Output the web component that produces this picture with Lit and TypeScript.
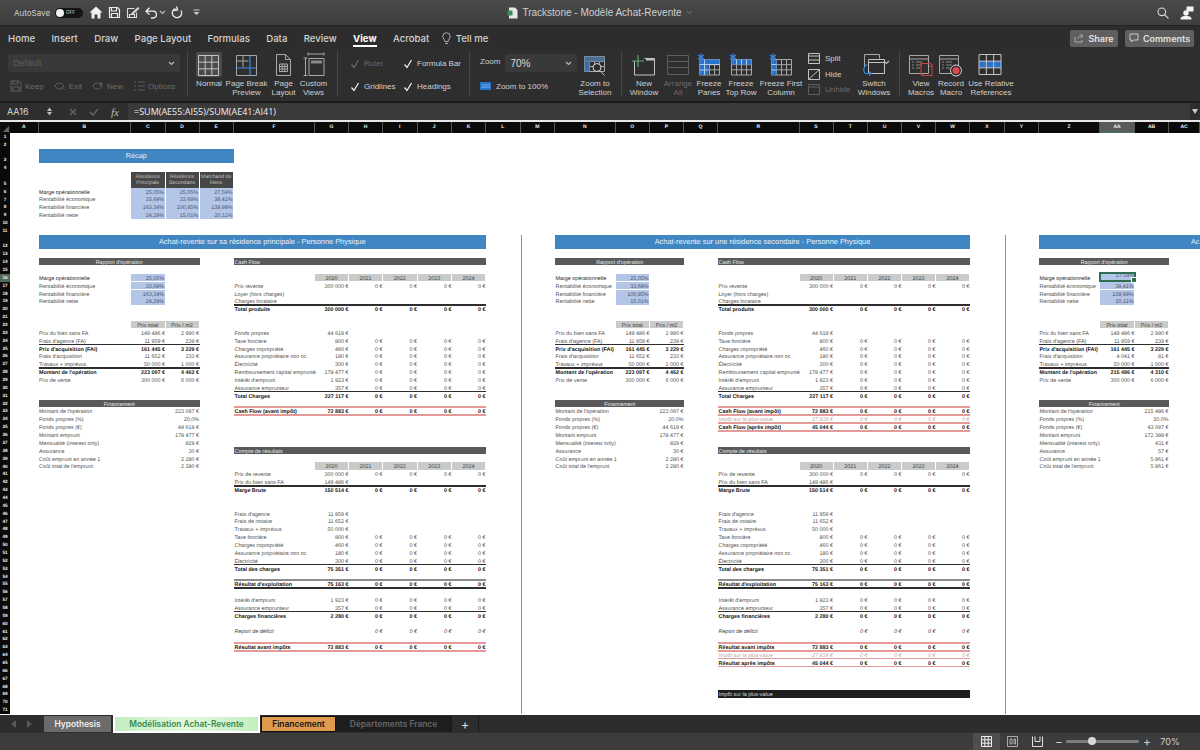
import { LitElement, html, css, svg } from 'lit';
import { customElement } from 'lit/decorators.js';
import { styleMap } from 'lit/directives/style-map.js';

// Column widths of the sheet, A to AC
const COL_WIDTHS = [
  28.5, 92.5, 34.5, 34, 34.5, 81, 34, 34, 34.5, 34.5, 34, 34.5, 34.5, 60.5, 34.5, 34, 34, 81.5, 34, 34.5, 34, 34, 34, 35, 34, 61, 35, 34, 31,
];
const COL_NAMES = COL_WIDTHS.map((_, i) => (i < 26 ? String.fromCharCode(65 + i) : 'A' + String.fromCharCode(39 + i)));
const TALL_ROWS = [3, 5, 12];
const col = (name: string) => COL_NAMES.indexOf(name) + 2;

interface Cell {
  c: number;
  r: number;
  span?: number;
  rows?: number;
  text?: string;
  cls: string;
}

const ZEROS = ['0 €', '0 €', '0 €', '0 €'];
const YEARS = ['2020', '2021', '2022', '2023', '2024'];

function rapport(cells: Cell[], L: number, pcts: string[], acq: string[], montant: string[], fin: string[]) {
  cells.push({ c: L, r: 14, span: 3, text: "Rapport d'opération", cls: 'bar center' });
  ['Marge opérationnelle', 'Rentabilité économique', 'Rentabilité financière', 'Rentabilité nette'].forEach((t, i) => {
    cells.push({ c: L, r: 16 + i, text: t, cls: i === 0 ? 'lbl dark' : 'lbl' });
    cells.push({ c: L + 1, r: 16 + i, text: pcts[i], cls: 'pct' });
  });
  cells.push({ c: L + 1, r: 22, text: 'Prix total', cls: 'yr' });
  cells.push({ c: L + 2, r: 22, text: 'Prix / m2', cls: 'yr' });
  const rows: [string, string, string, string][] = [
    ['Prix du bien sans FA', '149 486 €', '2 990 €', ''],
    ["Frais d'agence (FA)", '11 959 €', '239 €', ''],
    ["Prix d'acquisition (FAI)", '161 445 €', '3 229 €', 'b'],
    ["Frais d'acquisition", acq[0], acq[1], ''],
    ['Travaux + imprévus', '50 000 €', '1 000 €', ''],
    ["Montant de l'opération", montant[0], montant[1], 'b'],
    ['Prix de vente', '300 000 €', '6 000 €', ''],
  ];
  rows.forEach(([t, a, b, k], i) => {
    cells.push({ c: L, r: 23 + i, text: t, cls: `lbl ${k}` });
    cells.push({ c: L + 1, r: 23 + i, text: a, cls: `val ${k}` });
    cells.push({ c: L + 2, r: 23 + i, text: b, cls: `val ${k}` });
  });
  cells.push({ c: L, r: 25, span: 3, cls: 'rule' });
  cells.push({ c: L, r: 28, span: 3, cls: 'rule' });
  cells.push({ c: L, r: 32, span: 3, text: 'Financement', cls: 'bar center' });
  [
    "Montant de l'opération",
    'Fonds propres (%)',
    'Fonds propres (€)',
    'Montant emprunt',
    'Mensualité (interest only)',
    'Assurance',
    'Coût emprunt en année 1',
    "Coût total de l'emprunt",
  ].forEach((t, i) => {
    cells.push({ c: L, r: 33 + i, text: t, cls: 'lbl' });
    cells.push({ c: L + 2, r: 33 + i, text: fin[i], cls: 'val' });
  });
}

function line(cells: Cell[], L: number, r: number, label: string, vals: string[], k = '', skipFirst = false) {
  cells.push({ c: L, r, text: label, cls: `lbl ${k}` });
  vals.forEach((v, i) => cells.push({ c: L + 1 + i + (skipFirst ? 1 : 0), r, text: v, cls: `val ${k}` }));
}

function years(cells: Cell[], L: number, r: number) {
  YEARS.forEach((y, i) => cells.push({ c: L + 1 + i, r, text: y, cls: 'yr' }));
}

function pinkRows(cells: Cell[], L: number, r: number, avant: string, impot: string, apres: string, ext: boolean) {
  cells.push({ c: L, r, span: 6, cls: 'rule pink' });
  cells.push({ c: L, r: r + 1, span: 6, cls: 'rule pink' });
  line(cells, L, r, avant, ['72 883 €', ...ZEROS], 'b');
  if (ext) {
    line(cells, L, r + 1, impot, ['27 839 €', ...ZEROS], 'pale');
    line(cells, L, r + 2, apres, ['45 044 €', ...ZEROS], 'b');
    cells.push({ c: L, r: r + 2, span: 6, cls: 'rule pink' });
    cells.push({ c: L, r: r + 3, span: 6, cls: 'rule pink' });
  }
}

function statements(cells: Cell[], L: number, ext: boolean) {
  cells.push({ c: L, r: 14, span: 6, text: 'Cash Flow', cls: 'bar' });
  years(cells, L, 16);
  line(cells, L, 17, 'Prix revente', ['300 000 €', ...ZEROS]);
  line(cells, L, 18, 'Loyer (hors charges)', []);
  line(cells, L, 19, 'Charges locataire', []);
  cells.push({ c: L, r: 20, span: 6, cls: 'rule' });
  line(cells, L, 20, 'Total produits', ['300 000 €', ...ZEROS], 'b');
  line(cells, L, 23, 'Fonds propres', ['44 619 €']);
  (
    [
      ['Taxe foncière', '800 €'],
      ['Charges copropriété', '460 €'],
      ['Assurance propriétaire non oc.', '180 €'],
      ['Électricité', '300 €'],
      ['Remboursement capital emprunté', '178 477 €'],
      ["Intérêt d'emprunt", '1 923 €'],
      ['Assurance emprunteur', '357 €'],
    ] as [string, string][]
  ).forEach(([t, v], i) => line(cells, L, 24 + i, t, [v, ...ZEROS]));
  cells.push({ c: L, r: 31, span: 6, cls: 'rule' });
  line(cells, L, 31, 'Total Charges', ['227 117 €', ...ZEROS], 'b');
  pinkRows(cells, L, 33, 'Cash Flow (avant impôt)', 'Impôt sur la plus-value', 'Cash Flow (après impôt)', ext);

  cells.push({ c: L, r: 38, span: 6, text: 'Compte de résultats', cls: 'bar' });
  years(cells, L, 40);
  line(cells, L, 41, 'Prix de revente', ['300 000 €', ...ZEROS]);
  line(cells, L, 42, 'Prix du bien sans FA', ['149 486 €']);
  cells.push({ c: L, r: 43, span: 6, cls: 'rule' });
  line(cells, L, 43, 'Marge Brute', ['150 514 €', ...ZEROS], 'b');
  line(cells, L, 46, "Frais d'agence", ['11 959 €']);
  line(cells, L, 47, 'Frais de notaire', ['11 652 €']);
  line(cells, L, 48, 'Travaux + imprévus', ['50 000 €']);
  (
    [
      ['Taxe foncière', '800 €'],
      ['Charges copropriété', '460 €'],
      ['Assurance propriétaire non oc.', '180 €'],
      ['Électricité', '300 €'],
    ] as [string, string][]
  ).forEach(([t, v], i) => line(cells, L, 49 + i, t, [v, ...ZEROS]));
  cells.push({ c: L, r: 53, span: 6, cls: 'rule' });
  line(cells, L, 53, 'Total des charges', ['75 351 €', ...ZEROS], 'b');
  cells.push({ c: L, r: 55, span: 6, cls: 'rule grey' });
  cells.push({ c: L, r: 56, span: 6, cls: 'rule' });
  line(cells, L, 55, "Résultat d'exploitation", ['75 163 €', ...ZEROS], 'b');
  line(cells, L, 57, "Intérêt d'emprunt", ['1 923 €', ...ZEROS]);
  line(cells, L, 58, 'Assurance emprunteur', ['357 €', ...ZEROS]);
  cells.push({ c: L, r: 59, span: 6, cls: 'rule' });
  line(cells, L, 59, 'Charges financières', ['2 280 €', ...ZEROS], 'b');
  line(cells, L, 61, 'Report de déficit', ZEROS, 'it', true);
  pinkRows(cells, L, 63, 'Résultat avant impôts', 'Impôt sur la plus-value', 'Résultat après impôts', ext);
  if (ext) cells.push({ c: L, r: 69, span: 6, text: 'Impôt sur la plus-value', cls: 'bar black' });
}

function buildCells(): Cell[] {
  const cells: Cell[] = [];
  cells.push({ c: col('B'), r: 3, span: 4, text: 'Récap', cls: 'blue recap' });
  ['Résidence Principale', 'Résidence Secondaire', 'Marchand de biens'].forEach((t, i) =>
    cells.push({ c: col('C') + i, r: 5, text: t, cls: 'rhead' }),
  );
  (
    [
      ['Marge opérationnelle', '25,05%', '25,05%', '27,59%'],
      ['Rentabilité économique', '33,69%', '33,69%', '38,41%'],
      ['Rentabilité financière', '163,34%', '100,95%', '139,99%'],
      ['Rentabilité nette', '24,29%', '15,01%', '20,11%'],
    ] as string[][]
  ).forEach((row, i) => {
    cells.push({ c: col('B'), r: 6 + i, text: row[0], cls: i === 0 ? 'lbl dark' : 'lbl' });
    for (let k = 1; k < 4; k++) cells.push({ c: col('B') + k, r: 6 + i, text: row[k], cls: 'pct' });
  });

  cells.push({ c: col('B'), r: 12, span: 10, text: 'Achat-revente sur sa résidence principale - Personne Physique', cls: 'blue' });
  cells.push({ c: col('N'), r: 12, span: 10, text: 'Achat-revente sur une résidence secondaire - Personne Physique', cls: 'blue' });
  cells.push({ c: col('Z'), r: 12, span: 4, text: 'Ac', cls: 'blue clipped' });

  const finA = ['223 097 €', '20,0%', '44 619 €', '178 477 €', '829 €', '30 €', '2 280 €', '2 280 €'];
  rapport(cells, col('B'), ['25,05%', '33,69%', '163,34%', '24,29%'], ['11 652 €', '233 €'], ['223 097 €', '4 462 €'], finA);
  rapport(cells, col('N'), ['25,05%', '33,69%', '100,95%', '15,01%'], ['11 652 €', '233 €'], ['223 097 €', '4 462 €'], finA);
  rapport(
    cells,
    col('Z'),
    ['27,59%', '38,41%', '139,99%', '20,11%'],
    ['4 041 €', '81 €'],
    ['215 486 €', '4 310 €'],
    ['215 486 €', '20,0%', '43 097 €', '172 388 €', '431 €', '57 €', '5 861 €', '5 861 €'],
  );
  statements(cells, col('F'), false);
  statements(cells, col('R'), true);

  cells.push({ c: col('M'), r: 12, rows: 60, cls: 'pagebreak' });
  cells.push({ c: col('Y'), r: 12, rows: 60, cls: 'pagebreak' });
  return cells;
}

const CELLS = buildCells();
const ROW_NUMBERS = Array.from({ length: 71 }, (_, i) => i + 1);

const gridLines = (x: number, y: number, w: number, h: number, nx: number, ny: number, cls = 's') => {
  let d = `M${x} ${y}h${w}v${h}h${-w}z`;
  for (let i = 1; i < nx; i++) d += `M${x + (w * i) / nx} ${y}v${h}`;
  for (let i = 1; i < ny; i++) d += `M${x} ${y + (h * i) / ny}h${w}`;
  return svg`<path class=${cls} d=${d} />`;
};
const star = (x: number, y: number) =>
  svg`<path class="bl" d="M${x} ${y - 3.5}v7M${x - 3} ${y - 2}l6 4M${x - 3} ${y + 2}l6 -4" />`;
const macroWin = svg`<path class="s" d="M1.5 3.5h19v18h-19zM1.5 7h19" /><path class="s dimline" d="M4 10h2M8 10h6M4 13h2M8 13h6M4 16h2M8 16h4" />`;

const TOOL_ICONS: Record<string, unknown> = {
  normal: gridLines(2.5, 3.5, 20, 20, 3, 3, 's strong'),
  pageBreak: svg`${gridLines(2.5, 3.5, 20, 20, 1, 1)}<path class="s" d="M9 3.5v12M2.5 9h12" /><path class="bl" d="M16 3.5v20M2.5 16h20" />`,
  pageLayout: svg`<path class="s" d="M5.5 2.5h9l5 5v16h-14zM14.5 2.5v5h5" />${gridLines(8.5, 12, 8, 7.5, 3, 3)}`,
  custom: svg`<path class="s" d="M7 2h16M7 .5v3M23 .5v3M2.5 6h4M2.5 23.5h4M4.5 6v17.500" /><path class="s" d="M8 6.500h15v17h-15z" /><rect x="10" y="8.500" width="11" height="3" fill="#8a8a8a" />`,
  zoomSel: svg`${gridLines(2.5, 4.5, 20, 15, 4, 3)}<rect x="2.500" y="4.500" width="20" height="5" fill="#4c6f94" /><rect x="2.500" y="9.500" width="5" height="10" fill="#3a6ea5" /><circle cx="15" cy="15.500" r="4" fill="#2e2e2e" stroke="#dcdcdc" /><path class="s strong" d="M18 18.500l4.500 5" />`,
  newWin: svg`<path class="s strong" d="M3.500 9v14h20V6.500h-10" /><path d="M7 3v12M1 9h12" fill="none" stroke="#57b26a" stroke-width="1.100" /><rect x="15" y="6.500" width="8" height="2" fill="#c4c4c4" />`,
  arrange: svg`<path class="s faint" d="M2.500 3.500h21v6h-21zM2.500 9.500h21v6h-21zM2.500 15.500h21v7h-21z" />`,
  freezePanes: svg`${gridLines(3.5, 7.5, 20, 15.5, 4, 3)}<rect x="3.500" y="7.500" width="20" height="5" class="fb" /><rect x="3.500" y="7.500" width="9" height="15.500" class="fb" /><path class="w" d="M8.500 7.500v15.500M3.500 12.500h20M3.500 18h9" />${star(5, 5)}`,
  freezeTop: svg`${gridLines(3.5, 7.5, 20, 15.5, 4, 3)}<rect x="3.500" y="7.500" width="20" height="5" class="fb" /><path class="w" d="M8.500 7.500v5M13.500 7.500v5M18.500 7.500v5" />${star(5, 5)}`,
  freezeFirst: svg`${gridLines(3.5, 7.5, 20, 15.5, 4, 3)}<rect x="3.500" y="7.500" width="5" height="15.500" class="fb" /><path class="w" d="M3.500 12.500h5M3.500 18h5" />${star(5, 5)}`,
  macroView: svg`${macroWin}<path class="r" d="M13 11.500h9l2 1v11h-10v-1h-1zM24 14.500h-3" />`,
  macroRec: svg`${macroWin}<circle cx="18" cy="18.500" r="5.500" fill="#2e2e2e" stroke="#d8d8d8" /><circle cx="18" cy="18.500" r="3.500" fill="#e0464e" />`,
  relative: svg`<rect x="1" y="9" width="22" height="7" class="fb" />${gridLines(1, 2.5, 22, 20, 3, 3, 's strong')}`,
  switchWin: svg`<path class="s" d="M3.500 2.500h15v4M3.500 2.500v13" /><path class="s strong" d="M7.500 7.500h16v14h-16zM7.500 10.500h16" /><path class="bl" d="M6 12.500a6 6 0 0 0 -2 9h6M8 19.500l2 2 -2 2" />`,
};

const tool = (w: number, icon: string, lines: string[], dim = false, selected = false) => html`
  <div class="tool ${dim ? 'dim' : ''}" style=${styleMap({ width: `${w}px` })}>
    <div class="tool-icon ${selected ? 'selected' : ''}">
      <svg width="26" height="25" viewBox="0 0 26 25">${TOOL_ICONS[icon]}</svg>
    </div>
    ${lines.map(l => html`<span>${l}</span>`)}
  </div>
`;

const chevron = () => html`<svg class="chev" width="7" height="5" viewBox="0 0 7 5"><path d="M1 1l2.500 2.500L6 1" /></svg>`;
const check = (dim = false) =>
  html`<svg width="10" height="10" viewBox="0 0 10 10"><path d="M1.500 5.500l2.500 3 4.500 -7.500" fill="none" stroke=${dim ? '#666' : '#eee'} stroke-width="1.300" /></svg>`;

@customElement('app-root')
export class AppRoot extends LitElement {
  static styles = css`
    :host {
      display: flex;
      flex-direction: column;
      width: 1200px;
      height: 750px;
      overflow: hidden;
      background: #2e2e2e;
      font-family: 'Inter', 'Liberation Sans', sans-serif;
      color: #d8d8d8;
    }
    svg { display: block; flex: none; }
    .s { fill: none; stroke: #a8a8a8; stroke-width: 1; }
    .strong { stroke: #c4c4c4; }
    .faint { stroke: #5e5e5e; }
    .dimline { stroke: #8a8a8a; }
    .bl { fill: none; stroke: #3a8be6; stroke-width: 1.2; }
    .w { fill: none; stroke: #cfe0f4; stroke-width: 0.8; }
    .fb { fill: #2a73c9; }
    .r { fill: none; stroke: #c8403f; stroke-width: 1.1; }
    .chev path { fill: none; stroke: #bbb; stroke-width: 1.1; }

    .titlebar {
      height: 26px;
      flex: none;
      display: grid;
      grid-template-columns: 1fr auto 1fr;
      align-items: center;
      background: linear-gradient(#494949, #3e3e3e);
      border-bottom: 1px solid #232323;
      box-sizing: border-box;
    }
    .qat { display: flex; align-items: center; padding-left: 14px; font-size: 8px; color: #cfcfcf; }
    .toggle {
      width: 28px;
      height: 10px;
      margin: 0 6px 0 5px;
      border-radius: 5px;
      background: #151515;
      display: flex;
      align-items: center;
      gap: 2px;
      padding-left: 1px;
      box-sizing: border-box;
      font-size: 4.5px;
      font-weight: 600;
      color: #aaa;
    }
    .toggle i { width: 8px; height: 8px; border-radius: 50%; background: #f2f2f2; }
    .qat-icons { display: flex; align-items: center; gap: 5px; }
    .chev-gap { margin: 0 5px 0 1px; }
    .qat-more { margin-left: 9px; }
    .doc-title {
      display: flex;
      align-items: center;
      gap: 4px;
      font-family: 'Liberation Sans', sans-serif;
      font-size: 10px;
      color: #cfcfcf;
    }
    .top-right { display: flex; justify-content: flex-end; align-items: center; gap: 11px; padding-right: 6px; }

    .tabs {
      height: 24px;
      flex: none;
      display: flex;
      align-items: center;
      background: #2d2d2d;
      font-size: 9.6px;
      font-weight: 500;
      padding-left: 8px;
      box-sizing: border-box;
      gap: 16.4px;
      color: #d4d4d4;
    }
    .tabs .on { color: #fff; font-weight: 700; position: relative; }
    .tabs .on::after {
      content: '';
      position: absolute;
      left: 0;
      right: 0;
      bottom: -3px;
      height: 1.5px;
      background: #fff;
    }
    .tell { display: flex; align-items: center; gap: 5px; margin-left: -4px; }
    .tab-btns { margin-left: auto; display: flex; gap: 7px; padding-right: 6px; }
    .tab-btn {
      height: 17px;
      display: flex;
      align-items: center;
      justify-content: center;
      gap: 4px;
      background: #5f5f5f;
      border-radius: 2px;
      font-size: 9px;
      font-weight: 600;
      color: #e2e2e2;
    }
    .share { width: 48px; }
    .comments { width: 69px; }

    .ribbon {
      height: 51px;
      flex: none;
      display: flex;
      padding-left: 8px;
      box-sizing: border-box;
      background: #2e2e2e;
      font-family: 'Liberation Sans', sans-serif;
      font-size: 8px;
      color: #d0d0d0;
    }
    .sep { width: 1px; height: 45px; margin-top: 1px; background: #484848; flex: none; }
    .tool {
      display: flex;
      flex-direction: column;
      align-items: center;
      white-space: nowrap;
      line-height: 9px;
      flex: none;
    }
    .tool.dim { color: #6c6c6c; }
    .tool-icon {
      width: 26px;
      height: 25px;
      margin: 2px 0 2px;
      display: flex;
      align-items: center;
      justify-content: center;
      border-radius: 2px;
    }
    .tool-icon.selected { background: #4b4b4b; }
    .views { width: 172px; margin-right: 7px; display: flex; flex-direction: column; flex: none; }
    .select {
      height: 18px;
      margin-top: 4px;
      display: flex;
      align-items: center;
      justify-content: space-between;
      padding: 0 5px;
      box-sizing: border-box;
      background: #393939;
      border-radius: 2px;
      font-size: 9px;
      color: #d8d8d8;
    }
    .views .select { color: #5f5f5f; }
    .view-actions { display: flex; margin-top: 7px; padding-left: 2px; color: #6c6c6c; height: 14px; align-items: center; }
    .view-actions span { display: flex; align-items: center; gap: 3px; margin-right: 10px; }
    .checks {
      width: 131px;
      flex: none;
      display: grid;
      grid-template-columns: 53px 60px;
      grid-auto-rows: 23px;
      padding: 2px 0 0 12px;
      box-sizing: border-box;
      align-items: center;
      white-space: nowrap;
    }
    .checks span { display: flex; align-items: center; gap: 4px; }
    .checks .dim { color: #6c6c6c; }
    .zoom-box { width: 107px; flex: none; padding-left: 10px; box-sizing: border-box; }
    .zoom-row { display: flex; align-items: center; gap: 5px; }
    .zoom-row .select { flex: 1; font-size: 10px; }
    .zoom-hundred { display: flex; align-items: center; gap: 5px; margin-top: 8px; height: 12px; }
    .zoom-hundred b {
      width: 11px;
      height: 8px;
      background: #2a73c9;
      color: #9cc4f0;
      font-size: 5px;
      font-weight: 400;
      line-height: 8px;
      text-align: center;
    }
    .split {
      width: 48px;
      margin-left: 6px;
      flex: none;
      display: flex;
      flex-direction: column;
      padding-top: 1px;
      box-sizing: border-box;
    }
    .split span { display: flex; align-items: center; gap: 5px; height: 15.5px; }
    .split .dim { color: #6c6c6c; }
    .ml4 { margin-left: 4.5px; }
    .ml7 { margin-left: 7px; }
    .ml8 { margin-left: 8px; }
    .ml9 { margin-left: 9.5px; }
    .ml6 { margin-left: 6px; }
    .switch-icon { position: relative; }
    .switch-icon .chev { position: absolute; left: 27px; top: 10px; }

    .rib-gap { height: 2px; flex: none; background: #1c1c1c; }
    .formula {
      height: 17px;
      flex: none;
      display: flex;
      align-items: center;
      background: #2e2e2e;
      color: #d8d8d8;
    }
    .name-box { width: 47px; padding-left: 7px; box-sizing: border-box; font-size: 9px; }
    .spin { width: 14px; display: flex; flex-direction: column; gap: 1.5px; }
    .fx-btns { width: 65px; display: flex; align-items: center; gap: 12px; padding-left: 8px; box-sizing: border-box; color: #666; }
    .fx { font-family: 'Liberation Serif', serif; font-style: italic; font-size: 11px; color: #bbb; }
    .fx-input {
      flex: 1;
      align-self: stretch;
      background: #3a3a3a;
      display: flex;
      align-items: center;
      padding-left: 6px;
      color: #f0f0f0;
      font-family: 'Open Sans', 'Liberation Sans', sans-serif;
      font-size: 9px;
      margin-left: 2px;
    }
    .fx-end { width: 10px; display: flex; justify-content: center; align-items: center; align-self: stretch; }
    .white-line { height: 2px; flex: none; background: #e8e8e8; }

    .sheet {
      flex: none;
      display: grid;
      background: #fff;
      color: #4f4f4f;
      font-family: 'Liberation Sans', Arial, sans-serif;
      font-size: 5.4px;
      text-rendering: geometricPrecision;
      overflow: hidden;
      height: 593px;
    }
    .corner { background: #0d0d0d; position: relative; }
    .corner::after {
      content: '';
      position: absolute;
      right: 1px;
      bottom: 1px;
      border-style: solid;
      border-width: 0 0 6px 6px;
      border-color: transparent transparent #666 transparent;
    }
    .colh {
      background: #0a0a0a;
      color: #eee;
      font-weight: 700;
      font-size: 5px;
      text-align: center;
      line-height: 11px;
      border-right: 1px solid #555;
      box-sizing: border-box;
    }
    .colh.sel { background: #5a5a5a; box-shadow: inset 0 -1px 0 #3e7d5a; }
    .rowh {
      background: #0a0a0a;
      color: #eee;
      font-weight: 700;
      font-size: 4.7px;
      display: flex;
      align-items: flex-end;
      justify-content: center;
      line-height: 7.8px;
    }
    .rowh.sel { background: #4d6b58; }
    .cell { white-space: nowrap; line-height: 7.87px; min-width: 0; padding-top: 2px; box-sizing: border-box; }
    .lbl { padding-left: 0.5px; }
    .val { text-align: right; padding-right: 0.5px; }
    .dark { color: #262626; }
    .b { font-weight: 700; color: #181818; }
    .it { font-style: italic; color: #3c3c3c; }
    .pale { font-style: italic; color: #b4a8a8; }
    .bar {
      background: #595959;
      color: #e8e8e8;
      margin-bottom: 0.5px;
      padding-left: 0.5px;
      line-height: 6px;
    }
    .bar.center { text-align: center; }
    .bar.black { background: #1e1e1e; color: #ddd; }
    .blue {
      background: #3f86c3;
      color: #eaf3fb;
      font-size: 7.4px;
      text-align: center;
      line-height: 14px;
      padding-top: 0;
      margin-bottom: 1px;
      overflow: hidden;
    }
    .blue.clipped { text-align: left; padding-left: 152px; font-size: 7.2px; }
    .recap { font-size: 7.2px; }
    .rhead {
      background: #474747;
      color: #c4c4c4;
      font-size: 5.2px;
      line-height: 6.3px;
      white-space: normal;
      text-align: center;
      margin: 0 1px 0 0;
      padding-top: 1.5px;
    }
    .pct {
      background: #b4c6e7;
      color: #44506a;
      text-align: right;
      padding-right: 0.5px;
      margin: 0 1px 0.5px 0;
      line-height: 6px;
    }
    .yr {
      background: #cacaca;
      color: #3a3a3a;
      text-align: center;
      margin: 0 1px 0.5px 0;
      line-height: 6px;
    }
    .rule {
      align-self: start;
      height: 1.5px;
      margin-top: -1px;
      padding: 0;
      background: #2e2e2e;
    }
    .rule.pink { background: #e59a9a; }
    .rule.grey { background: #8c8c8c; }
    .pagebreak { width: 1px; padding: 0; background: #5f9fdc; }
    .active {
      position: relative;
      border: 2px solid #2f6e50;
      margin: -1.5px -1px -0.5px -1px;
      padding: 0;
      background: #b4c6e7;
      text-align: right;
      color: #44506a;
      line-height: 5.9px;
      z-index: 2;
    }
    .active i {
      position: absolute;
      right: -3px;
      bottom: -3px;
      width: 4px;
      height: 4px;
      background: #2f6e50;
      border: 0.5px solid #fff;
    }

    .sheet-tabs {
      height: 18.3px;
      flex: none;
      display: flex;
      background: #2d2d2d;
      font-size: 8.4px;
      font-weight: 600;
      padding-top: 1px;
      box-sizing: border-box;
    }
    .nav { width: 42px; display: flex; align-items: center; justify-content: center; gap: 11px; padding-bottom: 2px; box-sizing: border-box; }
    .sheet-tab {
      height: 15.5px;
      display: flex;
      align-items: center;
      justify-content: center;
      flex: none;
      box-sizing: border-box;
    }
    .t-hyp { width: 67px; margin-left: 2px; background: #6b6b6b; color: #f0f0f0; }
    .t-mod {
      width: 147px;
      height: 17.5px;
      margin: -1px 1px 0 2px;
      background: linear-gradient(90deg, #c3eec0, #e4f8df 50%, #c3eec0);
      border: 2px solid #fff;
      color: #3b8a4b;
    }
    .t-fin { width: 75px; background: #e09a4e; border: 1px solid #111; color: #161616; }
    .t-dep { width: 115px; background: #1e1e1e; color: #666; }
    .t-add {
      width: 28px;
      height: 15.5px;
      display: flex;
      align-items: center;
      justify-content: center;
      font-size: 13px;
      font-weight: 400;
      color: #ddd;
      border-left: 1px solid #1a1a1a;
      border-right: 1px solid #1a1a1a;
      box-sizing: border-box;
    }

    .status {
      flex: 1;
      display: flex;
      justify-content: flex-end;
      align-items: stretch;
      background: #3c3c3c;
      font-size: 9px;
      color: #cfcfcf;
    }
    .view-btn { width: 25px; display: flex; align-items: center; justify-content: center; }
    .view-btn.on { background: #4e4e4e; width: 27px; }
    .slider { display: flex; align-items: center; margin-left: 5px; width: 95px; gap: 4px; }
    .slider b { font-size: 12px; font-weight: 400; width: 7px; text-align: center; }
    .track { flex: 1; height: 2.5px; background: #7b7b7b; position: relative; border-radius: 1px; }
    .track i {
      position: absolute;
      left: 22px;
      top: -3px;
      width: 8px;
      height: 8px;
      border-radius: 50%;
      background: #d8d8d8;
    }
    .pct-label { width: 50px; display: flex; align-items: center; justify-content: center; padding-right: 10px; box-sizing: border-box; }
  `;

  private cellStyle(c: Cell) {
    return styleMap({
      gridColumn: `${c.c} / span ${c.span ?? 1}`,
      gridRow: `${c.r + 1} / span ${c.rows ?? 1}`,
    });
  }

  private renderTitlebar() {
    return html`
      <div class="titlebar">
        <div class="qat">
          AutoSave
          <div class="toggle"><i></i>OFF</div>
          <div class="qat-icons">
            <svg width="14" height="13" viewBox="0 0 14 13"><path d="M7 .5L.5 6.500h2V12.500h3V8.500h3v4h3V6.500h2z" fill="#f0f0f0" /></svg>
            <svg width="13" height="13" viewBox="0 0 13 13"><path d="M1.500 1.500h8l2 2v8h-10zM3.500 1.500v3.500h5v-3.500M3.500 11.500v-4h6v4" fill="none" stroke="#ededed" stroke-width="1.200" /></svg>
            <svg width="14" height="13" viewBox="0 0 14 13"><path d="M1.500 2.500h7M1.500 2.500v9h9v-5M3.500 11.500v-3h5v3" fill="none" stroke="#dcdcdc" stroke-width="1.100" /><path d="M5.500 7l6.500 -6 1.500 1.500 -6.500 6h-1.500z" fill="#dcdcdc" /></svg>
            <svg width="13" height="12" viewBox="0 0 13 12"><path d="M4.500 .8L1 4.200l3.500 3.400M1 4.200h7a3.400 3.400 0 0 1 0 6.800h-2" fill="none" stroke="#ededed" stroke-width="1.300" /></svg>
          </div>
          <svg class="chev chev-gap" width="7" height="5" viewBox="0 0 7 5"><path d="M1 1l2.500 2.500L6 1" /></svg>
          <svg width="13" height="13" viewBox="0 0 13 13"><path d="M8.500 2.500A4.700 4.700 0 1 1 3 4.500M7.500 .5l-1 3.500 3.800 .5" fill="none" stroke="#ededed" stroke-width="1.300" transform="matrix(-1 0 0 1 13 0)" /></svg>
          <svg class="qat-more" width="7" height="7" viewBox="0 0 7 7"><path d="M0.500 1h6" stroke="#ccc" /><path d="M.5 3h6l-3 3z" fill="#ccc" /></svg>
        </div>
        <div class="doc-title">
          <svg width="11" height="12" viewBox="0 0 11 12"><path d="M2 .5h6l2.500 2.500v8.500h-8.500z" fill="#e8e8e8" /><rect x=".5" y="3.500" width="5" height="5" fill="#3d8a5e" /></svg>
          Trackstone - Modèle Achat-Revente
          <svg width="7" height="5" viewBox="0 0 7 5"><path d="M1 1l2.500 2.500L6 1" fill="none" stroke="#777" /></svg>
        </div>
        <div class="top-right">
          <svg width="12" height="12" viewBox="0 0 12 12"><circle cx="4.800" cy="4.800" r="3.800" fill="none" stroke="#ddd" stroke-width="1.100" /><path d="M7.600 7.600l3.800 3.800" stroke="#ddd" stroke-width="1.300" /></svg>
          <svg width="14" height="14" viewBox="0 0 14 14"><rect x="6.500" y=".5" width="7" height="5" fill="#f4f4f4" /><circle cx="6" cy="7" r="2.700" fill="#f4f4f4" /><path d="M.5 13.500c0 -3 2 -3.600 5.500 -3.600s5.500 .6 5.500 3.600z" fill="#f4f4f4" /></svg>
        </div>
      </div>
    `;
  }

  private renderTabs() {
    return html`
      <div class="tabs">
        <span>Home</span><span>Insert</span><span>Draw</span><span>Page Layout</span><span>Formulas</span><span>Data</span><span>Review</span>
        <span class="on">View</span><span>Acrobat</span>
        <span class="tell">
          <svg width="9" height="13" viewBox="0 0 9 13"><path d="M2.800 9.500C2.800 7.500 .8 6.800 .8 4.400a3.700 3.700 0 0 1 7.400 0C8.200 6.800 6.200 7.500 6.200 9.500zM3 11.500h3" fill="none" stroke="#bbb" stroke-width=".9" /></svg>
          Tell me
        </span>
        <div class="tab-btns">
          <div class="tab-btn share">
            <svg width="10" height="10" viewBox="0 0 10 10"><path d="M1 4v5h7V7M4 6c0 -2 1.500 -3 4 -3M6.500 1l2.500 2 -2.500 2" fill="none" stroke="#aaa" /></svg>
            Share
          </div>
          <div class="tab-btn comments">
            <svg width="10" height="10" viewBox="0 0 10 10"><path d="M1 1h8v6h-4.500l-2 2v-2h-1.500z" fill="none" stroke="#ccc" /></svg>
            Comments
          </div>
        </div>
      </div>
    `;
  }

  private renderRibbon() {
    return html`
      <div class="ribbon">
        <div class="views">
          <div class="select">Default ${chevron()}</div>
          <div class="view-actions">
            <span>
              <svg width="12" height="12" viewBox="0 0 12 12"><path d="M1 1h8l2 2v8h-10zM3 1v3h5v-3M3 11v-4h6v4" fill="none" stroke="#5e5e5e" /></svg>
              Keep
            </span>
            <span>
              <svg width="12" height="10" viewBox="0 0 12 10"><path d="M1 5c2 -4 7 -4 9 0c-2 4 -7 4 -9 0z" fill="none" stroke="#5e5e5e" /><path d="M7 6l4 3" stroke="#7a4444" /></svg>
              Exit
            </span>
            <span>
              <svg width="12" height="10" viewBox="0 0 12 10"><path d="M1 5c2 -4 7 -4 9 0c-2 4 -7 4 -9 0z" fill="none" stroke="#5e5e5e" /><path d="M9 1v4M7 3h4" stroke="#5e5e5e" /></svg>
              New
            </span>
            <span>
              <svg width="12" height="10" viewBox="0 0 12 10"><path d="M1 1h2M1 5h2M1 9h2M5 1h7M5 5h7M5 9h7" stroke="#5e5e5e" /></svg>
              Options
            </span>
          </div>
        </div>
        <div class="sep"></div>
        <div class="ml4"></div>
        ${tool(33, 'normal', ['Normal'], false, true)} ${tool(42, 'pageBreak', ['Page Break', 'Preview'])}
        ${tool(32, 'pageLayout', ['Page', 'Layout'])} ${tool(28, 'custom', ['Custom', 'Views'])}
        <div class="sep ml9"></div>
        <div class="checks">
          <span class="dim">${check(true)}Ruler</span>
          <span>${check()}Formula Bar</span>
          <span>${check()}Gridlines</span>
          <span>${check()}Headings</span>
        </div>
        <div class="sep"></div>
        <div class="zoom-box">
          <div class="zoom-row">Zoom <div class="select">70% ${chevron()}</div></div>
          <div class="zoom-hundred"><b>100</b>Zoom to 100%</div>
        </div>
        ${tool(36, 'zoomSel', ['Zoom to', 'Selection'])}
        <div class="sep ml8"></div>
        <div class="ml6"></div>
        ${tool(32, 'newWin', ['New', 'Window'])} ${tool(36, 'arrange', ['Arrange', 'All'], true)}
        ${tool(26, 'freezePanes', ['Freeze', 'Panes'])} ${tool(38, 'freezeTop', ['Freeze', 'Top Row'])}
        ${tool(42, 'freezeFirst', ['Freeze First', 'Column'])}
        <div class="split">
          <span><svg width="12" height="11" viewBox="0 0 12 11"><path d="M.5 .5h11v10h-11zM.5 3h11M.5 7h11" fill="none" stroke="#c4c4c4" /></svg>Split</span>
          <span><svg width="12" height="11" viewBox="0 0 12 11"><path d="M.5 .5h11v10h-11zM.5 10.500l11 -10" fill="none" stroke="#c4c4c4" /></svg>Hide</span>
          <span class="dim"><svg width="12" height="11" viewBox="0 0 12 11"><path d="M.5 .5h11v10h-11zM.5 3h11" fill="none" stroke="#5e5e5e" /></svg>Unhide</span>
        </div>
        <div class="tool switch-icon" style=${styleMap({ width: '36px' })}>
          <div class="tool-icon"><svg width="26" height="25" viewBox="0 0 26 25">${TOOL_ICONS.switchWin}</svg></div>
          ${chevron()}
          <span>Switch</span><span>Windows</span>
        </div>
        <div class="sep ml7"></div>
        <div class="ml7"></div>
        ${tool(28, 'macroView', ['View', 'Macros'])} ${tool(32, 'macroRec', ['Record', 'Macro'])}
        ${tool(48, 'relative', ['Use Relative', 'References'])}
      </div>
    `;
  }

  private renderFormula() {
    return html`
      <div class="formula">
        <div class="name-box">AA16</div>
        <div class="spin">
          <svg width="5" height="4" viewBox="0 0 5 4"><path d="M2.500 .5L5 4H0z" fill="#bbb" /></svg>
          <svg width="5" height="4" viewBox="0 0 5 4"><path d="M2.500 3.500L5 0H0z" fill="#bbb" /></svg>
        </div>
        <div class="fx-btns">
          <svg width="8" height="8" viewBox="0 0 8 8"><path d="M1 1l6 6M7 1l-6 6" stroke="#666" stroke-width="1.300" /></svg>
          <svg width="10" height="8" viewBox="0 0 10 8"><path d="M1 4l3 3 5 -6" fill="none" stroke="#666" stroke-width="1.300" /></svg>
          <span class="fx">fx</span>
        </div>
        <div class="fx-input">=SUM(AE55:AI55)/SUM(AE41:AI41)</div>
        <div class="fx-end"><svg width="6" height="5" viewBox="0 0 6 5"><path d="M0 0h6L3 5z" fill="#ccc" /></svg></div>
      </div>
    `;
  }

  private renderSheet() {
    const columns = ['10px', ...COL_WIDTHS.map(w => `${w}px`)].join(' ');
    const rows = ['11px', ...ROW_NUMBERS.map(n => (TALL_ROWS.includes(n) ? '15.5px' : '7.87px'))].join(' ');
    return html`
      <div class="sheet" style=${styleMap({ gridTemplateColumns: columns, gridTemplateRows: rows })}>
        <div class="corner"></div>
        ${COL_NAMES.map(n => html`<div class="colh ${n === 'AA' ? 'sel' : ''}">${n}</div>`)}
        ${ROW_NUMBERS.map(
          n => html`<div class="rowh ${n === 16 ? 'sel' : ''}" style=${styleMap({ gridRow: `${n + 1}`, gridColumn: '1' })}>${n}</div>`,
        )}
        ${CELLS.map(c => html`<div class="cell ${c.cls}" style=${this.cellStyle(c)}>${c.text ?? ''}</div>`)}
        <div class="cell active" style=${styleMap({ gridRow: '17', gridColumn: `${col('AA')}` })}>27,59%<i></i></div>
      </div>
    `;
  }

  private renderBottom() {
    return html`
      <div class="sheet-tabs">
        <div class="nav">
          <svg width="5" height="8" viewBox="0 0 5 8"><path d="M5 0v8L0 4z" fill="#5a5a5a" /></svg>
          <svg width="5" height="8" viewBox="0 0 5 8"><path d="M0 0v8l5 -4z" fill="#5a5a5a" /></svg>
        </div>
        <div class="sheet-tab t-hyp">Hypothesis</div>
        <div class="sheet-tab t-mod">Modélisation Achat-Revente</div>
        <div class="sheet-tab t-fin">Financement</div>
        <div class="sheet-tab t-dep">Départements France</div>
        <div class="t-add">+</div>
      </div>
      <div class="status">
        <div class="view-btn on">
          <svg width="11" height="11" viewBox="0 0 11 11"><path d="M.5 .5h10v10h-10zM3.800 .5v10M7.200 .5v10M.5 3.800h10M.5 7.200h10" fill="none" stroke="#ececec" /></svg>
        </div>
        <div class="view-btn">
          <svg width="11" height="11" viewBox="0 0 11 11"><path d="M.5 .5h10v10h-10zM3 3h2v5h-2zM7 3h1.500v5h-1.500z" fill="none" stroke="#aaa" /></svg>
        </div>
        <div class="view-btn">
          <svg width="11" height="11" viewBox="0 0 11 11"><path d="M.5 .5v10h10v-10M3 .5v5h5v-5" fill="none" stroke="#e0e0e0" /></svg>
        </div>
        <div class="slider">
          <b>−</b>
          <div class="track"><i></i></div>
          <b>+</b>
        </div>
        <div class="pct-label">70%</div>
      </div>
    `;
  }

  render() {
    return html`
      ${this.renderTitlebar()} ${this.renderTabs()} ${this.renderRibbon()}
      <div class="rib-gap"></div>
      ${this.renderFormula()}
      <div class="white-line"></div>
      ${this.renderSheet()} ${this.renderBottom()}
    `;
  }
}
